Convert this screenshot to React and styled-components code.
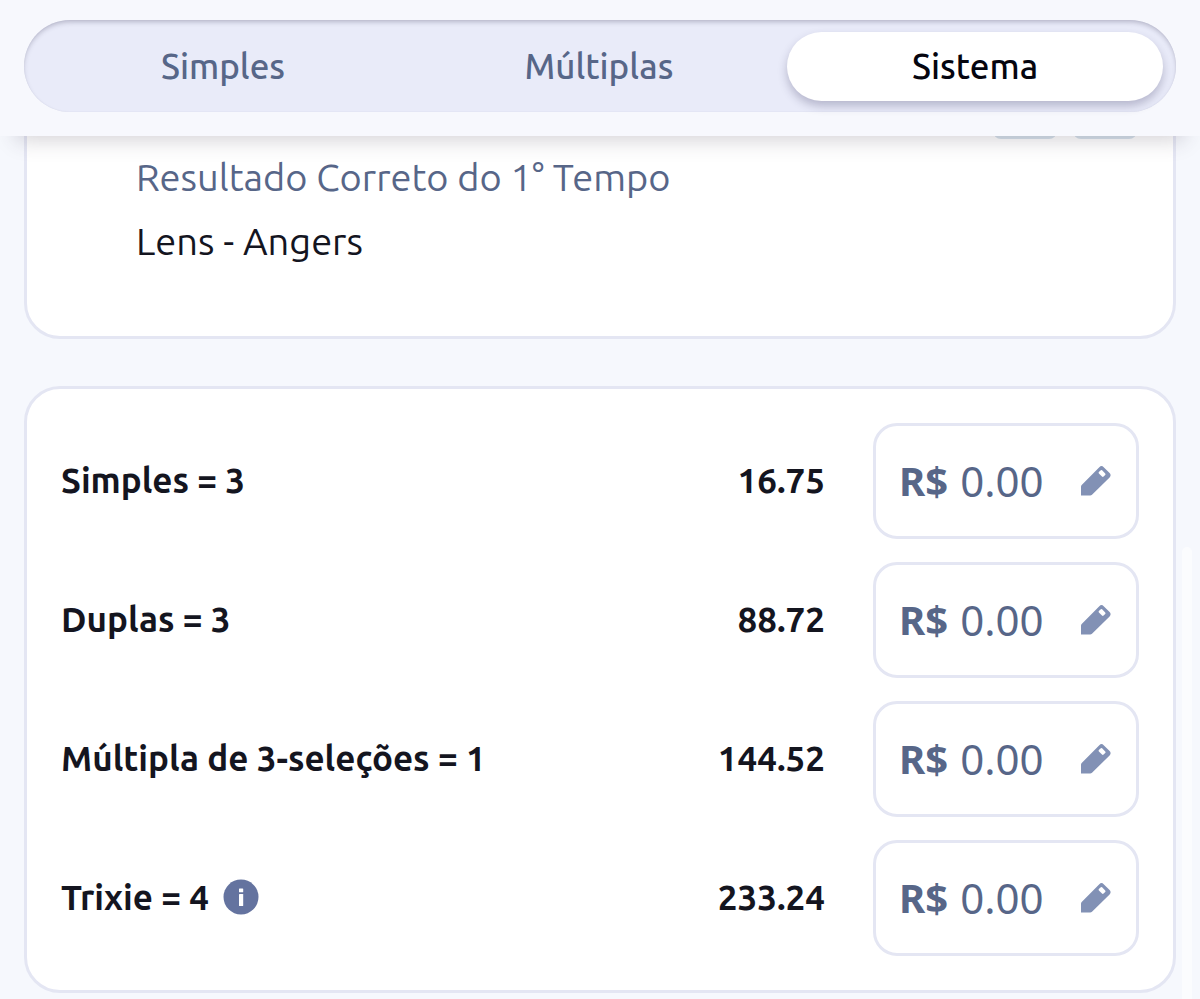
import React, { useState } from "react";
import styled, { createGlobalStyle } from "styled-components";

const GlobalStyle = createGlobalStyle`
  *, *::before, *::after { box-sizing: border-box; }
  body {
    margin: 0;
    background: #f6f8fd;
    color: #14151f;
    font-family: Ubuntu, "Noto Sans", "Open Sans", sans-serif;
  }
`;

const Page = styled.div`
  position: relative;
  min-height: 100vh;
  overflow: hidden;
`;

const Header = styled.header`
  position: relative;
  z-index: 2;
  padding: 20px 24px 24px;
  background: #f7f8fd;
  box-shadow: 0 20px 20px -16px rgba(60, 50, 70, 0.22);
`;

const Tabs = styled.div`
  display: grid;
  grid-template-columns: repeat(3, 1fr);
  height: 92px;
  padding: 12px 13px 11px 11px;
  border-radius: 46px;
  background: #e9ebf9;
  box-shadow: inset 0 3px 5px -1px rgba(50, 45, 80, 0.28), inset 0 0 1px rgba(80, 80, 130, 0.16);
`;

const Tab = styled.button`
  border: 0;
  border-radius: 35px;
  padding: 0 0 2px;
  font: inherit;
  font-size: 35px;
  font-weight: 500;
  color: ${({ $active }) => ($active ? "#05050f" : "#576688")};
  background: ${({ $active }) => ($active ? "#fff" : "transparent")};
  box-shadow: ${({ $active }) => ($active ? "0 5px 10px rgba(50, 45, 90, 0.28)" : "none")};
  cursor: pointer;
`;

const Content = styled.main`
  display: flex;
  flex-direction: column;
  gap: 47px;
  margin-top: -40px;
  padding: 0 24px 6px;
`;

const Card = styled.section`
  border: 3px solid #e4e6f3;
  border-radius: 36px;
  background: #fff;
`;

const Selection = styled(Card)`
  padding: 0 36px 67px 109px;
`;

const Odds = styled.div`
  display: flex;
  justify-content: flex-end;
  gap: 16px;
  height: 40px;
`;

const Chip = styled.span`
  width: 64px;
  border-radius: 8px;
  background: #d6e2ec;
`;

const Market = styled.p`
  margin: 10px 0 0;
  font-size: 38px;
  line-height: 56px;
  color: #576688;
`;

const Match = styled.p`
  margin: 8px 0 0;
  font-size: 38px;
  line-height: 56px;
`;

const Systems = styled(Card)`
  display: flex;
  flex-direction: column;
  gap: 23px;
  padding: 34px;
`;

const Row = styled.div`
  display: flex;
  align-items: center;
  font-size: 35px;
  font-weight: 700;
  line-height: 48px;
`;

const Name = styled.label`
  flex: 1;
  display: flex;
  align-items: center;
  gap: 14px;
  padding-bottom: 2px;
`;

const InfoIcon = styled.svg`
  width: 36px;
  height: 36px;
`;

const Odd = styled.span`
  margin-right: 48px;
  padding-bottom: 2px;
`;

const Stake = styled.div`
  display: flex;
  align-items: center;
  width: 266px;
  height: 116px;
  padding: 0 24px 0 23px;
  border: 3px solid #e4e6f3;
  border-radius: 24px;
  color: #576688;
  font-family: "Noto Sans", "Open Sans", sans-serif;
  font-size: 40px;
`;

const StakeInput = styled.input`
  flex: 1;
  min-width: 0;
  border: 0;
  outline: 0;
  padding: 0 0 0 12px;
  background: transparent;
  color: inherit;
  font: inherit;
  font-size: 42px;
  font-weight: 400;
`;

const EditButton = styled.button`
  display: flex;
  border: 0;
  padding: 0;
  background: transparent;
  cursor: pointer;
`;

const Scrollbar = styled.div`
  position: absolute;
  top: 547px;
  right: 8px;
  bottom: 0;
  width: 10px;
  border-radius: 5px 5px 0 0;
  background: #fbfcfe;
`;

const Pencil = () => (
  <svg width="32" height="32" viewBox="0 0 32 32" aria-hidden="true">
    <path
      fill="#8291b5"
      fillRule="evenodd"
      d="M1 30.500V21.700Q1 20.700 1.700 20L19.300 2.200Q21.500 0 23.700 2.200L29.600 8Q31.600 10.200 29.600 12.400L12 29.800Q11.200 30.500 10.200 30.500ZM18.900 8.500L22 11.600Q22.800 12.300 23.600 11.500L25.200 9.900Q25.900 9.100 25.200 8.400L22.100 5.300Q21.300 4.600 20.500 5.400L18.900 7Q18.200 7.800 18.900 8.500Z"
    />
  </svg>
);

const Info = () => (
  <InfoIcon viewBox="0 0 36 36" aria-label="Informações">
    <circle cx="18" cy="18" r="17.500" fill="#64739f" />
    <rect x="16" y="9.500" width="4.200" height="3.800" rx=".6" fill="#fff" />
    <rect x="16" y="15" width="4.200" height="12" rx=".6" fill="#fff" />
  </InfoIcon>
);

const tabs = ["Simples", "Múltiplas", "Sistema"];

const systems = [
  { id: "simples", name: "Simples = 3", odd: "16.75" },
  { id: "duplas", name: "Duplas = 3", odd: "88.72" },
  { id: "multipla", name: "Múltipla de 3-seleções = 1", odd: "144.52" },
  { id: "trixie", name: "Trixie = 4", odd: "233.24", info: true },
];

export default function App() {
  const [active, setActive] = useState("Sistema");
  return (
    <Page>
      <GlobalStyle />
      <Header>
        <Tabs role="tablist">
          {tabs.map((tab) => (
            <Tab
              key={tab}
              role="tab"
              aria-selected={tab === active}
              $active={tab === active}
              onClick={() => setActive(tab)}
            >
              {tab}
            </Tab>
          ))}
        </Tabs>
      </Header>
      <Content>
        <Selection>
          <Odds aria-hidden="true">
            <Chip />
            <Chip />
          </Odds>
          <Market>Resultado Correto do 1° Tempo</Market>
          <Match>Lens - Angers</Match>
        </Selection>
        <Systems>
          {systems.map(({ id, name, odd, info }) => (
            <Row key={id}>
              <Name htmlFor={id}>
                {name}
                {info && <Info />}
              </Name>
              <Odd>{odd}</Odd>
              <Stake>
                <span>R$</span>
                <StakeInput id={id} defaultValue="0.00" inputMode="decimal" />
                <EditButton type="button" aria-label={`Editar ${name}`}>
                  <Pencil />
                </EditButton>
              </Stake>
            </Row>
          ))}
        </Systems>
      </Content>
      <Scrollbar />
    </Page>
  );
}
